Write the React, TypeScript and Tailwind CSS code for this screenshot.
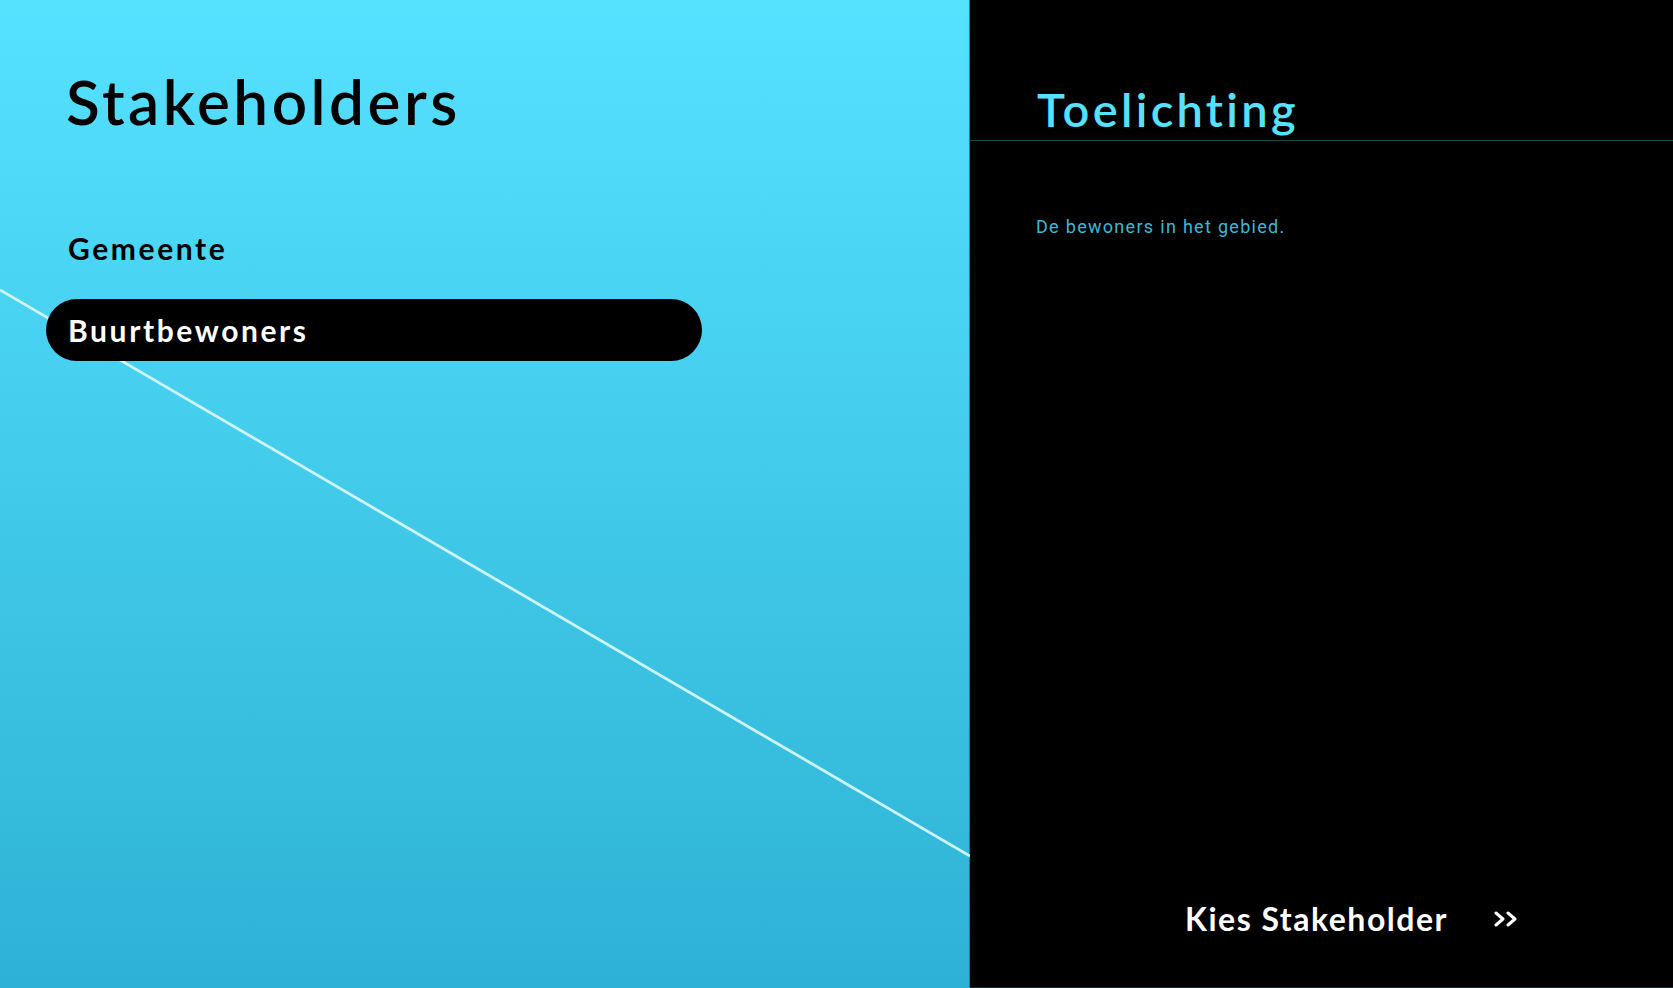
import React from "react";

export default function App() {
  return (
    <div className="flex h-[988px] w-full overflow-hidden bg-black font-['Lato','Noto_Sans',sans-serif]">
      {/* Left panel */}
      <div className="relative w-[970px] shrink-0 border-r border-[#1e7f99] bg-gradient-to-b from-[#55e2ff] to-[#2db2d5]">
        <svg className="pointer-events-none absolute inset-0" width="970" height="988" viewBox="0 0 970 988">
          <line x1="0" y1="290" x2="970" y2="856" stroke="#cdf4ff" strokeWidth="2.8" />
        </svg>
        <div className="relative flex flex-col pl-[46px]">
          <h1 className="ml-[20px] mt-[70px] text-[62px] font-semibold leading-none tracking-[3.5px] text-black">
            Stakeholders
          </h1>
          <div className="mt-[85px] flex flex-col gap-[20px]">
            <div className="flex h-[62px] w-[656px] items-center pl-[22px] text-[30px] font-bold tracking-[2.6px] text-black">
              Gemeente
            </div>
            <div className="flex h-[62px] w-[656px] items-center rounded-full bg-black pl-[22px] text-[30px] font-bold tracking-[2.6px] text-white">
              Buurtbewoners
            </div>
          </div>
        </div>
      </div>

      {/* Right panel */}
      <div className="flex flex-1 flex-col border-b border-[#0d2a33]">
        <div className="border-b border-[#1a4552] pl-[67px] pt-[86px] pb-[7px]">
          <h2 className="text-[47px] font-semibold leading-none tracking-[3.3px] text-[#55e2ff]">
            Toelichting
          </h2>
        </div>
        <p className="mt-[77px] pl-[66px] font-['Roboto',sans-serif] text-[18px] leading-none tracking-[1.3px] text-[#38b9d9]">
          De bewoners in het gebied.
        </p>
        <div className="mt-auto mb-[52px] flex items-center pl-[215px]">
          <span className="text-[32px] font-bold leading-none tracking-[1.5px] text-white">
            Kies Stakeholder
          </span>
          <svg className="ml-[46px]" width="24" height="16" viewBox="0 0 24 16" fill="none">
            <polyline points="2,2 9,8 2,14" stroke="white" strokeWidth="3" strokeLinecap="round" strokeLinejoin="round" />
            <polyline points="14,2 21,8 14,14" stroke="white" strokeWidth="3" strokeLinecap="round" strokeLinejoin="round" />
          </svg>
        </div>
      </div>
    </div>
  );
}
